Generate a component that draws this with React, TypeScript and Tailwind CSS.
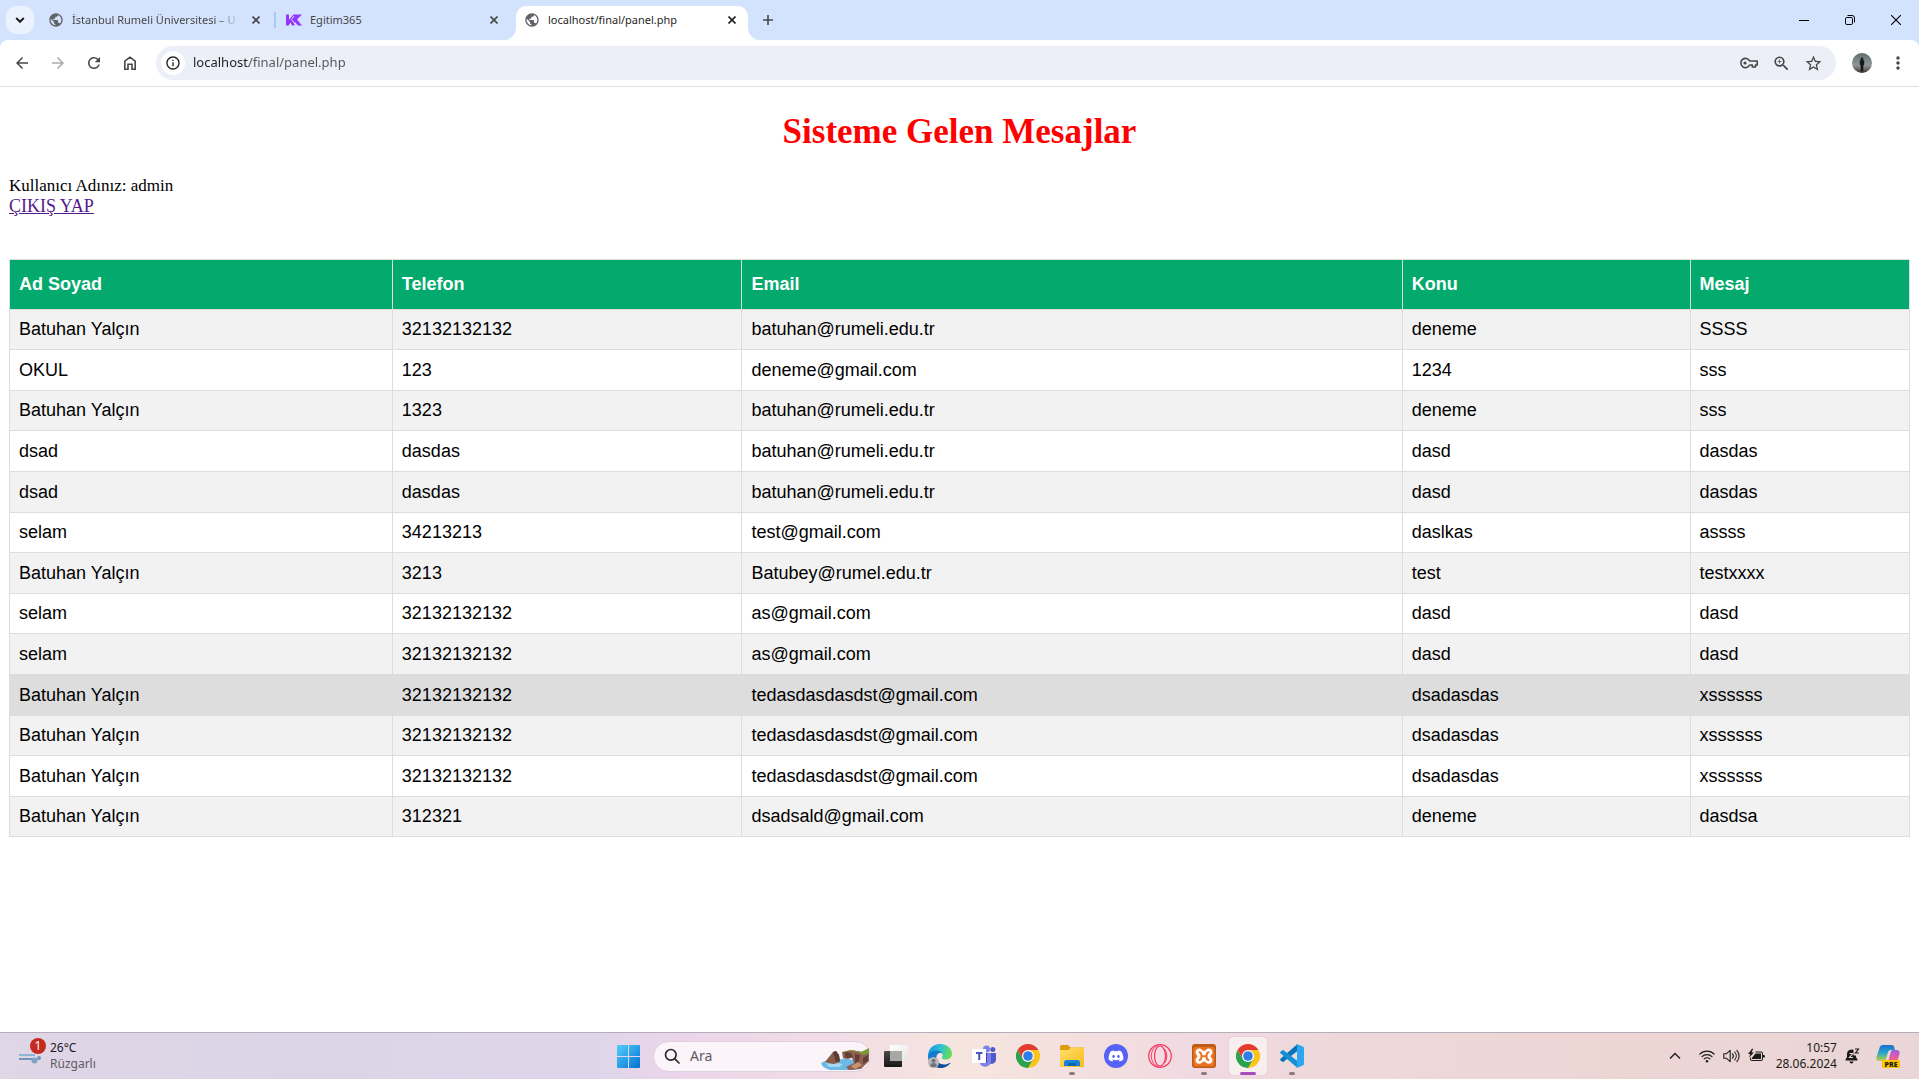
import React from "react";
import {
  MdArrowBack,
  MdArrowForward,
  MdRefresh,
  MdInfoOutline,
  MdStarBorder,
  MdZoomIn,
  MdMoreVert,
  MdPublic,
} from "react-icons/md";
import { FaDiscord } from "react-icons/fa";

const messages: string[][] = [
  ["Batuhan Yalçın", "32132132132", "batuhan@rumeli.edu.tr", "deneme", "SSSS"],
  ["OKUL", "123", "deneme@gmail.com", "1234", "sss"],
  ["Batuhan Yalçın", "1323", "batuhan@rumeli.edu.tr", "deneme", "sss"],
  ["dsad", "dasdas", "batuhan@rumeli.edu.tr", "dasd", "dasdas"],
  ["dsad", "dasdas", "batuhan@rumeli.edu.tr", "dasd", "dasdas"],
  ["selam", "34213213", "test@gmail.com", "daslkas", "assss"],
  ["Batuhan Yalçın", "3213", "Batubey@rumel.edu.tr", "test", "testxxxx"],
  ["selam", "32132132132", "as@gmail.com", "dasd", "dasd"],
  ["selam", "32132132132", "as@gmail.com", "dasd", "dasd"],
  ["Batuhan Yalçın", "32132132132", "tedasdasdasdst@gmail.com", "dsadasdas", "xssssss"],
  ["Batuhan Yalçın", "32132132132", "tedasdasdasdst@gmail.com", "dsadasdas", "xssssss"],
  ["Batuhan Yalçın", "32132132132", "tedasdasdasdst@gmail.com", "dsadasdas", "xssssss"],
  ["Batuhan Yalçın", "312321", "dsadsald@gmail.com", "deneme", "dasdsa"],
];

const headings = ["Ad Soyad", "Telefon", "Email", "Konu", "Mesaj"];
const hoveredRow = 9;

function CloseGlyph() {
  return (
    <svg className="size-2" viewBox="0 0 8 8" fill="none" stroke="currentColor" strokeWidth="1.6">
      <path d="M0.5 0.5 7.5 7.5M7.5 0.5 0.5 7.5" />
    </svg>
  );
}

function CloseTab() {
  return (
    <button aria-label="Sekmeyi kapat" className="flex size-4 shrink-0 items-center justify-center">
      <CloseGlyph />
    </button>
  );
}

function TabStrip() {
  return (
    <header className="flex h-10 items-center bg-[#d3e2fd] pl-1.5 text-[11px] text-[#474747]">
      <button aria-label="Sekme ara" className="flex size-7 shrink-0 items-center justify-center rounded-[10px] bg-[#ebf2fe] text-[#1f1f1f]">
        <svg className="h-2 w-2.5" viewBox="0 0 10 8" fill="none" stroke="currentColor" strokeWidth="2">
          <path d="M1.2 2 5 5.8 8.800 2" />
        </svg>
      </button>
      <div className="ml-1.5 flex h-full w-[234px] items-center pl-2">
        <MdPublic className="size-4 shrink-0 text-[#5f6368]" />
        <span className="ml-2 w-[168px] whitespace-nowrap mask-r-from-85% mask-r-to-100%">
          İstanbul Rumeli Üniversitesi – U
        </span>
        <span className="ml-2 flex">
          <CloseTab />
        </span>
      </div>
      <span className="h-4 w-0.5 bg-[#a8c7fa]" />
      <div className="flex h-full w-60 items-center pl-2.5">
        <svg className="h-3 w-4 shrink-0" viewBox="0 0 16 12" fill="#9334ff">
          <path d="M0 .5h3v5.200L7.500.5H16L11 5.500 16 11.500h-4L8.500 7.500V11.500H6L4.500 8.500 2.500 11.500H0z" />
          <path d="M8 2 5.500 5.500 9 10" fill="none" stroke="#d3e2fd" strokeWidth="1" />
        </svg>
        <span className="ml-2 flex-1">Egitim365</span>
        <span className="mr-3.5 flex">
          <CloseTab />
        </span>
      </div>
      <div className="relative mt-1.5 flex h-[34px] w-[232px] items-center rounded-t-[10px] bg-white pb-1.5 pl-2 text-[#1f1f1f]">
        <svg className="absolute -left-3 bottom-0 size-3" viewBox="0 0 12 12" fill="#fff">
          <path d="M12 0v12H0A12 12 0 0 0 12 0z" />
        </svg>
        <svg className="absolute -right-3 bottom-0 size-3" viewBox="0 0 12 12" fill="#fff">
          <path d="M0 0v12h12A12 12 0 0 1 0 0z" />
        </svg>
        <MdPublic className="size-4 shrink-0 text-[#5f6368]" />
        <span className="ml-2 flex-1">localhost/final/panel.php</span>
        <span className="mr-2 flex">
          <CloseTab />
        </span>
      </div>
      <button aria-label="Yeni sekme" className="ml-1.5 flex size-7 items-center justify-center">
        <svg className="size-2.5" viewBox="0 0 10 10" stroke="currentColor" strokeWidth="1.6">
          <path d="M5 0v10M0 5h10" />
        </svg>
      </button>
      <div className="ml-auto flex h-full text-black">
        <button aria-label="Simge durumuna küçült" className="flex w-[46px] items-center justify-center">
          <svg className="size-2.5" viewBox="0 0 10 10" stroke="currentColor">
            <path d="M0 5.500h10" />
          </svg>
        </button>
        <button aria-label="Önceki boyut" className="flex w-[46px] items-center justify-center">
          <svg className="size-2.5" viewBox="0 0 10 10" fill="none" stroke="currentColor">
            <rect x="0.500" y="2.500" width="7" height="7" rx="1.300" />
            <path d="M2.500.5H7A2.500 2.500 0 0 1 9.500 3V7.500" />
          </svg>
        </button>
        <button aria-label="Kapat" className="flex w-[46px] items-center justify-center">
          <svg className="size-2.5" viewBox="0 0 10 10" stroke="currentColor" strokeWidth="1.100">
            <path d="M0 0 10 10M10 0 0 10" />
          </svg>
        </button>
      </div>
    </header>
  );
}

function Toolbar() {
  return (
    <div className="bg-[#d3e2fd]">
      <nav className="flex h-[47px] items-center rounded-t-lg border-b border-[#dfdfdf] bg-white pl-1 text-[#474747]">
        <button aria-label="Geri" className="flex size-9 items-center justify-center">
          <MdArrowBack className="size-[18px]" />
        </button>
        <button aria-label="İleri" className="flex size-9 items-center justify-center text-[#ababab]">
          <MdArrowForward className="size-[18px]" />
        </button>
        <button aria-label="Yenile" className="flex size-9 items-center justify-center">
          <MdRefresh className="size-[18px]" />
        </button>
        <button aria-label="Ana sayfa" className="flex size-9 items-center justify-center">
          <svg className="h-3.5 w-3.5" viewBox="0 0 14 14" fill="none" stroke="currentColor" strokeWidth="1.600">
            <path d="M1.800 5.200 7 1.200l5.200 4v8H9V8.300H5v4.900H1.800z" />
          </svg>
        </button>
        <div className="ml-2 flex h-[34px] flex-1 items-center rounded-full bg-[#eceef8] pl-[5px] pr-[7px]">
          <button aria-label="Site bilgileri" className="flex size-6 items-center justify-center rounded-full bg-white text-[#1f1f1f]">
            <MdInfoOutline className="size-4" />
          </button>
          <input
            aria-label="Adres"
            type="text"
            defaultValue="localhost/final/panel.php"
            className="ml-2 flex-1 bg-linear-to-r from-[#1f1f1f] from-[56px] to-[#555] to-[56px] bg-clip-text text-[13px] text-transparent outline-none"
          />
          <button aria-label="Şifreler" className="flex size-8 items-center justify-center">
            <svg className="h-3 w-[18px]" viewBox="0 0 18 12" fill="none" stroke="currentColor" strokeWidth="1.600">
              <path d="M9.600 4H17.200V8H15.500V10H12.300V8H9.600A4.600 4.600 0 1 1 9.600 4z" strokeLinejoin="round" />
              <circle cx="5" cy="6" r="1.600" fill="currentColor" stroke="none" />
            </svg>
          </button>
          <button aria-label="Yakınlaştır" className="flex size-8 items-center justify-center">
            <MdZoomIn className="size-[19px]" />
          </button>
          <button aria-label="Yer işareti ekle" className="flex size-8 items-center justify-center">
            <MdStarBorder className="size-[19px]" />
          </button>
        </div>
        <button aria-label="Profil" className="ml-4 mr-3.5 size-5">
          <svg viewBox="0 0 20 20" className="size-5">
            <defs>
              <linearGradient id="sky" x1="0" y1="0" x2="0" y2="1">
                <stop offset="0" stopColor="#5f6a6c" />
                <stop offset="0.600" stopColor="#8d9896" />
                <stop offset="0.800" stopColor="#6f6a66" />
                <stop offset="1" stopColor="#332b2a" />
              </linearGradient>
            </defs>
            <circle cx="10" cy="10" r="10" fill="url(#sky)" />
            <path d="M10 4.500a1.300 1.300 0 0 1 1 2.200l1.200 1v4l-.8.500-.2 6H8.800l-.2-6-.8-.5v-4l1.200-1a1.300 1.300 0 0 1 1-2.200z" fill="#15191b" />
          </svg>
        </button>
        <button aria-label="Menü" className="mr-[9px] flex size-6 items-center justify-center">
          <MdMoreVert className="size-5" />
        </button>
      </nav>
    </div>
  );
}

function PanelPage() {
  return (
    <main className="flex-1 px-[9px] pt-[25px]">
      <h1 className="text-center font-['Liberation_Serif',serif] text-[35px] leading-10 font-bold text-[red]">
        Sisteme Gelen Mesajlar
      </h1>
      <div className="mt-[23px] font-['Liberation_Serif',serif] leading-[21px] text-black">
        <p className="text-[17px]">Kullanıcı Adınız: admin</p>
        <a href="#cikis" className="block w-fit text-lg leading-[21px] text-[#551a8b] underline">
          ÇIKIŞ YAP
        </a>
      </div>
      <table className="mt-[42px] w-full border-collapse font-['Liberation_Sans',sans-serif] text-lg text-black">
        <colgroup>
          <col className="w-[20.15%]" />
          <col className="w-[18.4%]" />
          <col className="w-[34.75%]" />
          <col className="w-[15.15%]" />
          <col className="w-[11.55%]" />
        </colgroup>
        <thead>
          <tr className="bg-[#04aa6d] text-left text-white">
            {headings.map((h) => (
              <th key={h} className="border border-[#ddd] px-[9px] py-3.5 leading-[21px] font-bold">
                {h}
              </th>
            ))}
          </tr>
        </thead>
        <tbody className="leading-[22px] [&>tr:nth-child(5n+1)]:leading-[21px] [&>tr:nth-child(5n+3)]:leading-[21px]">
          {messages.map((row, i) => (
            <tr key={i} className={i === hoveredRow ? "bg-[#ddd]" : i % 2 === 0 ? "bg-[#f2f2f2]" : "bg-white"}>
              {row.map((cell, j) => (
                <td key={j} className="border border-[#ddd] px-[9px] py-[9px]">
                  {cell}
                </td>
              ))}
            </tr>
          ))}
        </tbody>
      </table>
    </main>
  );
}

function ChromeLogo() {
  return (
    <svg className="size-6" viewBox="0 0 24 24">
      <path d="M12 12V6h10.400A12 12 0 0 1 12 24z" fill="#fcc31e" />
      <path d="M1.600 6 6.800 15 12 12V6H22.400A12 12 0 0 0 1.600 6z" fill="#e33b2e" />
      <path d="M1.600 6 6.800 15 12 18 17.200 15 12 24A12 12 0 0 1 1.600 6z" fill="#2ba24c" />
      <circle cx="12" cy="12" r="6" fill="#fff" />
      <circle cx="12" cy="12" r="4.800" fill="#2f7de9" />
    </svg>
  );
}

function WindowsLogo() {
  return (
    <svg className="size-[23px]" viewBox="0 0 23 23">
      <defs>
        <linearGradient id="win" x1="0" y1="0" x2="1" y2="1">
          <stop offset="0" stopColor="#50d0fb" />
          <stop offset="1" stopColor="#0470d2" />
        </linearGradient>
      </defs>
      <path d="M1 0h10v11H0V1a1 1 0 0 1 1-1zM12 0h10a1 1 0 0 1 1 1v10H12zM0 12h11v11H1a1 1 0 0 1-1-1zM12 12h11v10a1 1 0 0 1-1 1H12z" fill="url(#win)" />
    </svg>
  );
}

function SearchArt() {
  return (
    <svg className="h-[22px] w-12" viewBox="0 0 48 22">
      <path d="M0 15q6-4 13-2l12-3 12 4-2 8H9Q1 20 0 15z" fill="#6cb9e6" />
      <path d="M4 14q4 3 10 1l8 1-4 3H8z" fill="#a5daf2" />
      <path d="M4 14 8 9l4-5 3-1 3 4 1 7-6 2-6-1z" fill="#8a5b49" />
      <path d="M12 4l3-1 3 4 1 6-4 1z" fill="#5e3c36" />
      <path d="M21 4 30 2l12 2 6-2v11l-8 8-12 1-3-3 8-4-2-5-5 1-4-1z" fill="#8f6050" />
      <path d="M24 4l6 1 2 4-5 1-3-1zM34 6l5 1-1 6-4 4zM42 10l5-3v6l-5 3z" fill="#5f4038" />
      <path d="M30 18l7-4 4 3-7 4z" fill="#c69375" />
      <path d="M21 4 31 2l9 2 8-4v5l-6 2-5-3-7-1z" fill="#7a9a35" />
    </svg>
  );
}

function TaskViewLogo() {
  return (
    <svg className="size-6" viewBox="0 0 24 24">
      <defs>
        <linearGradient id="tvDark" x1="0" y1="0" x2="0" y2="1">
          <stop offset="0" stopColor="#4a4a4a" />
          <stop offset="1" stopColor="#161616" />
        </linearGradient>
        <linearGradient id="tvLight" x1="0" y1="0" x2="1" y2="1">
          <stop offset="0" stopColor="#fff" />
          <stop offset="1" stopColor="#e6e4e4" />
        </linearGradient>
      </defs>
      <rect x="6" y="1" width="18" height="16" rx="1" fill="url(#tvLight)" />
      <rect x="0" y="7" width="18" height="16" rx="1" fill="url(#tvDark)" />
      <path d="M6 7h12v10H6z" fill="#a9a7a6" />
    </svg>
  );
}

function EdgeLogo() {
  return (
    <svg className="size-6" viewBox="0 0 24 24">
      <defs>
        <linearGradient id="edgeA" x1="0" y1="0.300" x2="1" y2="0.500">
          <stop offset="0" stopColor="#1b95dc" />
          <stop offset="0.500" stopColor="#2fc1d8" />
          <stop offset="1" stopColor="#6adf4c" />
        </linearGradient>
      </defs>
      <path d="M0 12C0 4 6 0 12 0c7 0 12 4.500 12 9.500 0 4-3 6-6 6-3.500 0-4.500-1.200-3.800-2.200C15.500 11 14 8 10 8 5 8 1 10 0 14z" fill="url(#edgeA)" />
      <path d="M0 12.500C1 8 5 6.500 9 6.500c2.500 0 4.500 1 5.300 2.500C10 8 7.500 12 8 15.500 8.700 20 13 22 17 21.500 15 23.200 13 24 11 24 5 23.500 0 18.500 0 12.500z" fill="#127bd0" />
      <path d="M8.500 11.500C7 17 11 20.500 16 20.500c2.500 0 4.800-1 6-1.800.4 0 .6.200.3.600C20 22.500 16.500 24 13 24c-5 0-8.500-7-4.500-12.500z" fill="#0d4b9b" />
      <circle cx="5.500" cy="18.500" r="5.500" fill="#b9b9bb" />
      <circle cx="5.500" cy="16.700" r="2" fill="#737376" />
      <path d="M2.200 22a3.300 3 0 0 1 6.600 0q-3.300 2.500-6.600 0z" fill="#737376" />
    </svg>
  );
}

function TeamsLogo() {
  return (
    <svg className="size-6" viewBox="0 0 24 24">
      <circle cx="14.500" cy="5" r="3.500" fill="#7b83eb" />
      <circle cx="20.800" cy="5.500" r="2.500" fill="#5059c9" />
      <path d="M17 9h7v7a4 4 0 0 1-7 2.500z" fill="#5059c9" />
      <path d="M8 9h11v8a6 6 0 0 1-11 3z" fill="#7b83eb" />
      <path d="M10 9h5v10h-5z" fill="#3d3fa0" />
      <rect x="0" y="5" width="14" height="14" fill="#fff" />
      <path d="M4 9h6.500M7.250 9v7" stroke="#4b53bc" strokeWidth="2" />
    </svg>
  );
}

function ExplorerLogo() {
  return (
    <svg className="size-6" viewBox="0 0 24 24">
      <defs>
        <linearGradient id="folder" x1="0" y1="0" x2="1" y2="1">
          <stop offset="0" stopColor="#ffdf6b" />
          <stop offset="1" stopColor="#fabb1c" />
        </linearGradient>
      </defs>
      <path d="M0 2.500A1.500 1.500 0 0 1 1.500 1H8l2.500 2.500H24V10H0z" fill="#dd9c0c" />
      <path d="M0 6h8.500L11 3.500h12a1 1 0 0 1 1 1V22a1 1 0 0 1-1 1H1a1 1 0 0 1-1-1z" fill="url(#folder)" />
      <path d="M4 18.500A2.500 2.500 0 0 1 6.500 16h11a2.500 2.500 0 0 1 2.500 2.500V22H4z" fill="#1683d8" />
      <path d="M8 19h8v3H8z" fill="#0f62ad" />
    </svg>
  );
}

function OperaLogo() {
  return (
    <svg className="size-6" viewBox="0 0 24 24" fill="none" stroke="#f8365f">
      <circle cx="12" cy="12" r="11.300" strokeWidth="1.200" />
      <ellipse cx="12" cy="12" rx="5.500" ry="10" strokeWidth="1.200" />
      <path d="M10 1.500C5.500 3.500 3.300 7.500 3.300 12s2.200 8.500 6.700 10.500M16 4.500c2 2 2.800 4.500 2.800 7.500s-.8 5.500-2.800 7.500" strokeWidth="1" />
    </svg>
  );
}

function XamppLogo() {
  return (
    <svg className="size-6" viewBox="0 0 24 24">
      <rect width="24" height="24" rx="3" fill="#c05a17" />
      <rect x="1.500" y="3" width="21" height="19.500" rx="2" fill="#ea7423" />
      <path
        d="M7.200 5.300c2.300 0 2.600 2.400 4.800 2.400s2.500-2.400 4.800-2.400a3 3 0 0 1 3 3c0 2-2 2.200-2 3.900s2 1.900 2 3.900a3 3 0 0 1-3 3c-2.300 0-2.600-2.400-4.800-2.400s-2.500 2.400-4.800 2.400a3 3 0 0 1-3-3c0-2 2-2.200 2-3.900s-2-1.900-2-3.900a3 3 0 0 1 3-3z"
        fill="#fff"
        stroke="#fff"
        strokeWidth="1.400"
      />
      <path
        d="M7.500 8.300q2 .4 2 3.900t-2 3.900M16.500 8.300q-2 .4-2 3.900t2 3.900M9.500 12.200h5"
        fill="none"
        stroke="#ea7423"
        strokeWidth="2"
        strokeLinecap="round"
      />
    </svg>
  );
}

function VsCodeLogo() {
  return (
    <svg className="size-6" viewBox="0 0 24 24">
      <path d="M17.500 0v7L3.500 17.800a1 1 0 0 1-1.200 0L.5 16.200a1 1 0 0 1 0-1.400z" fill="#0a74b8" />
      <path d="M17.500 24v-7L3.500 6.200a1 1 0 0 0-1.200 0L.5 7.800a1 1 0 0 0 0 1.400z" fill="#1590d6" />
      <path d="M17 0l6.200 2.800a1.300 1.300 0 0 1 .8 1.200v16a1.300 1.300 0 0 1-.8 1.200L17 24z" fill="#2aa7ee" />
    </svg>
  );
}

function CopilotLogo() {
  return (
    <svg className="size-6" viewBox="0 0 24 24">
      <defs>
        <linearGradient id="cpA" x1="0" y1="0" x2="0" y2="1">
          <stop offset="0" stopColor="#1a6fd0" />
          <stop offset="0.500" stopColor="#29a8c8" />
          <stop offset="1" stopColor="#c2cf3a" />
        </linearGradient>
        <linearGradient id="cpB" x1="0" y1="0" x2="0" y2="1">
          <stop offset="0" stopColor="#9b5de8" />
          <stop offset="0.600" stopColor="#ee5d95" />
          <stop offset="1" stopColor="#f98a5c" />
        </linearGradient>
      </defs>
      <path d="M7 1h8.500c2 0 2.500 1.300 3 3l.5 2h-4c-2 0-2.600 1.300-3.200 3L10 15c-.5 1.500-1.500 2-3 2H3c-2.500 0-3-2-2.500-4L3.500 4C4 2 5 1 7 1z" fill="url(#cpA)" />
      <path d="M17 6h3.500c2.500 0 3.500 2 3 4l-2 7c-.5 1.800-1.500 3-3.500 3H9l3-2 2.500-9c.5-2 1-3 2.500-3z" fill="url(#cpB)" />
      <rect x="6" y="16" width="18" height="8" rx="1.500" fill="#fdc500" />
      <text x="15" y="22.500" textAnchor="middle" fontFamily="Open Sans, sans-serif" fontWeight="800" fontSize="7" fill="#1b1b1b">
        PRE
      </text>
    </svg>
  );
}

function TaskButton({ label, state, children }: { label: string; state?: "open" | "active"; children: React.ReactNode }) {
  return (
    <button aria-label={label} className="flex h-full w-11 items-center justify-center">
      <span
        className={
          state === "active"
            ? "relative flex size-[38px] items-center justify-center rounded bg-[#f8eeee] shadow-[0_0_1px_#b9a6a8]"
            : "relative flex size-[38px] items-center justify-center"
        }
      >
        {children}
        {state === "open" && <span className="absolute bottom-0 left-4 h-[3px] w-1.5 rounded-full bg-[#877c7e]" />}
        {state === "active" && <span className="absolute bottom-0 left-[11px] h-[3px] w-4 rounded-full bg-[#a84cc0]" />}
      </span>
    </button>
  );
}

function Taskbar() {
  return (
    <footer className="grid h-[47px] grid-cols-[1fr_auto_1fr] items-center border-t border-[#b5adb8] bg-[linear-gradient(90deg,#dfd6e6_0%,#dbd5e7_15%,#dfd5ea_31%,#ecd6ea_36%,#f1dce6_43%,#f6e5df_50%,#f3dfdf_57%,#f0d9e2_63%,#efd8da_70%,#edd5d4_85%,#ead6d8_100%)] text-[#1b1b1b]">
      <button className="flex items-center pl-[18px] text-left text-xs leading-4">
        <span className="relative h-9 w-8">
          <svg className="absolute left-0 top-3.5 h-3 w-6" viewBox="0 0 24 12" fill="none" strokeWidth="2">
            <path d="M1 3h16" stroke="#8fb4d6" />
            <path d="M1 7h17" stroke="#6f96bd" />
            <circle cx="16.500" cy="8.500" r="3" fill="#7fa3c4" />
            <circle cx="21" cy="6" r="2" fill="#6f96bd" />
          </svg>
          <span className="absolute left-3 top-0 flex size-4 items-center justify-center rounded-full bg-[#c42b1c] text-xs text-white">1</span>
        </span>
        <span className="flex flex-col">
          <span>26°C</span>
          <span className="text-[#5f5b63]">Rüzgarlı</span>
        </span>
      </button>
      <div className="flex h-full items-center pl-px">
        <TaskButton label="Başlat">
          <WindowsLogo />
        </TaskButton>
        <label className="mx-[3px] flex h-[31px] w-[218px] items-center rounded-full border border-[#e0cfdc] bg-[#fbf4f8] pl-2.5 pr-px">
          <svg className="size-4 shrink-0" viewBox="0 0 16 16" fill="none" stroke="#2a2a2a" strokeWidth="1.700">
            <circle cx="6.800" cy="6.800" r="5.300" />
            <path d="M10.600 10.600 15 15" strokeLinecap="round" />
          </svg>
          <input type="text" aria-label="Ara" placeholder="Ara" className="ml-2.5 min-w-0 flex-1 bg-transparent text-sm outline-none placeholder:text-[#5f5b63]" />
          <span className="flex shrink-0 self-end pb-px">
            <SearchArt />
          </span>
        </label>
        <TaskButton label="Görev görünümü"><TaskViewLogo /></TaskButton>
        <TaskButton label="Edge"><EdgeLogo /></TaskButton>
        <TaskButton label="Teams"><TeamsLogo /></TaskButton>
        <TaskButton label="Chrome"><ChromeLogo /></TaskButton>
        <TaskButton label="Dosya Gezgini" state="open"><ExplorerLogo /></TaskButton>
        <TaskButton label="Discord">
          <span className="flex size-6 items-center justify-center rounded-full bg-[#5662f6] text-white">
            <FaDiscord className="size-4" />
          </span>
        </TaskButton>
        <TaskButton label="Opera"><OperaLogo /></TaskButton>
        <TaskButton label="XAMPP" state="open"><XamppLogo /></TaskButton>
        <TaskButton label="Chrome" state="active"><ChromeLogo /></TaskButton>
        <TaskButton label="Visual Studio Code" state="open"><VsCodeLogo /></TaskButton>
      </div>
      <div className="flex items-center justify-end pr-[19px]">
        <button aria-label="Gizli simgeler" className="mr-[18px] flex">
          <svg className="h-2 w-3" viewBox="0 0 12 8" fill="none" stroke="currentColor" strokeWidth="1.400">
            <path d="M1 6.500 6 1.500l5 5" />
          </svg>
        </button>
        <button aria-label="Ağ, ses ve pil" className="flex items-center gap-2">
          <svg className="h-4 w-4" viewBox="0 0 16 16" fill="none" stroke="currentColor" strokeWidth="1.200" strokeLinecap="round">
            <path d="M.8 6.200a10.200 10.200 0 0 1 14.400 0M3 8.600a7.100 7.100 0 0 1 10 0M5.200 10.900a4 4 0 0 1 5.600 0" />
            <circle cx="8" cy="13.200" r="1.200" fill="currentColor" stroke="none" />
          </svg>
          <svg className="h-4 w-[17px]" viewBox="0 0 17 16" fill="none" stroke="currentColor" strokeWidth="1.100" strokeLinecap="round" strokeLinejoin="round">
            <path d="M.8 5.800h2.400L7.200 2.300v11.400L3.200 10.200H.8zM9.500 5.800a3.500 3.500 0 0 1 0 4.400M11.700 4a6 6 0 0 1 0 8M13.900 2.300a8.500 8.500 0 0 1 0 11.400" />
          </svg>
          <svg className="h-4 w-[17px]" viewBox="0 0 17 16" fill="currentColor">
            <path d="M7.500 3.500H13A2 2 0 0 1 15 5.500V7h1.200a.6.600 0 0 1 .6.600v1.300a.6.600 0 0 1-.6.600H15v1.500a2 2 0 0 1-2 2H4a2 2 0 0 1-2-2V9.500h1V11a1 1 0 0 0 1 1h9a1 1 0 0 0 1-1V5.500a1 1 0 0 0-1-1H7.500z" />
            <path d="M7.500 5.500H13v5.500H4V9.700zM4 .8 0 6h2.200L1.200 9.500 6 4.500H3.600L5.200.8z" />
          </svg>
        </button>
        <button className="ml-2.5 flex w-[62px] flex-col items-end text-xs leading-4">
          <span>10:57</span>
          <span>28.06.2024</span>
        </button>
        <button aria-label="Bildirimler" className="ml-2 flex">
          <svg className="h-4 w-[15px]" viewBox="0 0 15 16" fill="currentColor">
            <path d="M6.500 1.500A4.800 4.800 0 0 0 2 6.300V9L.5 11.500V12.500h12V11.500L11 9V7.500H8.500V1.700A5 5 0 0 0 6.500 1.500zM4.500 13.500h4a2 2 0 0 1-4 0z" />
            <path d="M10 1h3.500L10.500 5H14" fill="none" stroke="currentColor" strokeWidth="1.200" />
            <path d="M4.500 5.500h3.300L4.500 9.500H8" fill="none" stroke="#ecd6d7" strokeWidth="1.100" />
          </svg>
        </button>
        <button aria-label="Copilot" className="ml-4 flex">
          <CopilotLogo />
        </button>
      </div>
    </footer>
  );
}

export default function App() {
  return (
    <div className="flex min-h-screen flex-col bg-white font-['Noto_Sans',sans-serif]">
      <TabStrip />
      <Toolbar />
      <PanelPage />
      <Taskbar />
    </div>
  );
}
